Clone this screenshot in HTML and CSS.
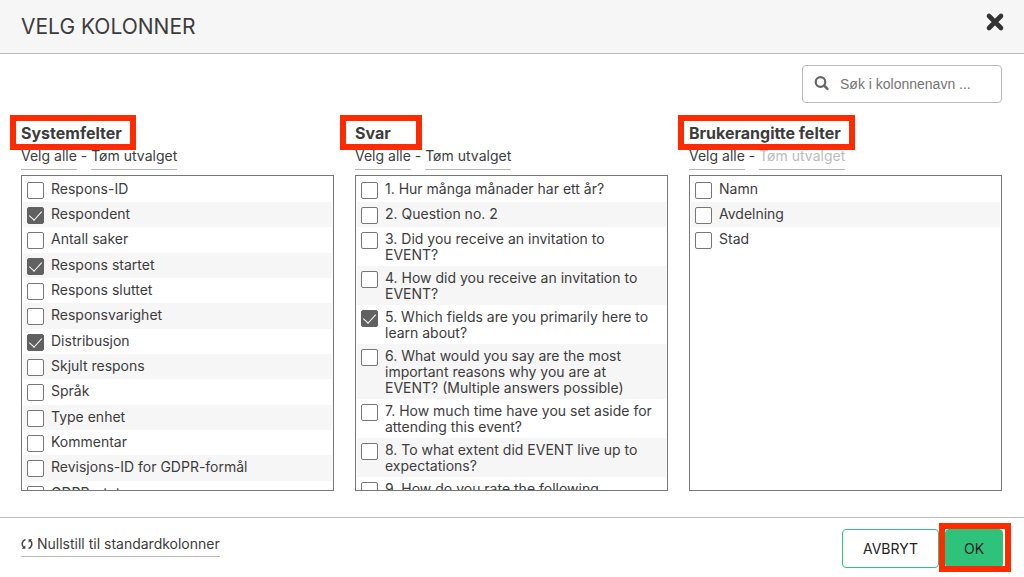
FILE: index.html
```
<!DOCTYPE html>
<html lang="no">
<head>
    <meta charset="UTF-8">
    <meta name="viewport" content="width=device-width, initial-scale=1.0">
    <title>Velg kolonner</title>
    <link rel="stylesheet" href="styles.css">
</head>
<body>
    <header class="header">
        <h1>VELG KOLONNER</h1>
        <button type="button" class="close" aria-label="Lukk">
            <svg width="20" height="20" viewBox="0 0 20 20"><path d="M4 4L16 16M16 4L4 16" fill="none" stroke="#333" stroke-width="4.6" stroke-linecap="round"/></svg>
        </button>
    </header>

    <main class="content">
        <div class="search">
            <svg width="16" height="16" viewBox="0 0 16 16"><circle cx="6.5" cy="6" r="4.8" fill="none" stroke="#666" stroke-width="2.2"/><path d="M10.2 9.7L13.4 12.9" stroke="#666" stroke-width="2.6" stroke-linecap="round"/></svg>
            <input type="text" aria-label="Søk i kolonnenavn" placeholder="Søk i kolonnenavn ...">
        </div>

        <div class="columns">
            <section class="column">
                <h2 class="marked">Systemfelter</h2>
                <div class="actions"><a href="#">Velg alle</a> - <a href="#">Tøm utvalget</a></div>
                <ul class="list">
                    <li><label><input type="checkbox"><span>Respons-ID</span></label></li>
                    <li><label><input type="checkbox" checked><span>Respondent</span></label></li>
                    <li><label><input type="checkbox"><span>Antall saker</span></label></li>
                    <li><label><input type="checkbox" checked><span>Respons startet</span></label></li>
                    <li><label><input type="checkbox"><span>Respons sluttet</span></label></li>
                    <li><label><input type="checkbox"><span>Responsvarighet</span></label></li>
                    <li><label><input type="checkbox" checked><span>Distribusjon</span></label></li>
                    <li><label><input type="checkbox"><span>Skjult respons</span></label></li>
                    <li><label><input type="checkbox"><span>Språk</span></label></li>
                    <li><label><input type="checkbox"><span>Type enhet</span></label></li>
                    <li><label><input type="checkbox"><span>Kommentar</span></label></li>
                    <li><label><input type="checkbox"><span>Revisjons-ID for GDPR-formål</span></label></li>
                    <li><label><input type="checkbox"><span>GDPR-status</span></label></li>
                </ul>
            </section>

            <section class="column">
                <h2 class="marked short">Svar</h2>
                <div class="actions"><a href="#">Velg alle</a> - <a href="#">Tøm utvalget</a></div>
                <ul class="list">
                    <li><label><input type="checkbox"><span>1. Hur många månader har ett år?</span></label></li>
                    <li><label><input type="checkbox"><span>2. Question no. 2</span></label></li>
                    <li><label><input type="checkbox"><span>3. Did you receive an invitation to EVENT?</span></label></li>
                    <li><label><input type="checkbox"><span>4. How did you receive an invitation to EVENT?</span></label></li>
                    <li><label><input type="checkbox" checked><span>5. Which fields are you primarily here to learn about?</span></label></li>
                    <li><label><input type="checkbox"><span>6. What would you say are the most important reasons why you are at EVENT? (Multiple answers possible)</span></label></li>
                    <li><label><input type="checkbox"><span>7. How much time have you set aside for attending this event?</span></label></li>
                    <li><label><input type="checkbox"><span>8. To what extent did EVENT live up to expectations?</span></label></li>
                    <li><label><input type="checkbox"><span>9. How do you rate the following</span></label></li>
                </ul>
            </section>

            <section class="column">
                <h2 class="marked">Brukerangitte felter</h2>
                <div class="actions"><a href="#">Velg alle</a> - <a href="#" class="disabled">Tøm utvalget</a></div>
                <ul class="list">
                    <li><label><input type="checkbox"><span>Namn</span></label></li>
                    <li><label><input type="checkbox"><span>Avdelning</span></label></li>
                    <li><label><input type="checkbox"><span>Stad</span></label></li>
                </ul>
            </section>
        </div>
    </main>

    <footer class="footer">
        <a href="#" class="reset">
            <svg width="12" height="12" viewBox="0 0 12 12"><path d="M4.5 1.5C1 2.5 0 7 3 10M7.5 10.5C11 9.5 12 5 9 2" fill="none" stroke="#444" stroke-width="1.5"/><path d="M0.8 10.8H4.4V7.2ZM11.2 1.2H7.6V4.8Z" fill="#444"/></svg>
            Nullstill til standardkolonner
        </a>
        <div class="buttons">
            <button type="button" class="btn">AVBRYT</button>
            <div class="marked ok">
                <button type="button" class="btn primary">OK</button>
            </div>
        </div>
    </footer>
</body>
</html>
```
FILE: styles.css
```
* {
    box-sizing: border-box;
}
body {
    margin: 0;
    height: 100vh;
    display: flex;
    flex-direction: column;
    font-family: Inter, "Liberation Sans", sans-serif;
    font-size: 14px;
    line-height: 16px;
    color: #3c3c3c;
    background-color: #fff;
}
a {
    color: inherit;
    text-decoration: none;
    border-bottom: 1px solid #b8b8b8;
}

/* header */
.header {
    display: flex;
    justify-content: space-between;
    align-items: center;
    height: 54px;
    padding: 0 19px 0 21px;
    background-color: #f6f6f6;
    border-bottom: 1px solid #bbb;
}
.header h1 {
    margin: 0;
    font-size: 21px;
    line-height: 24px;
    font-weight: 400;
}
.close {
    display: flex;
    margin-bottom: 9px;
    padding: 0;
    border: none;
    background: none;
    cursor: pointer;
}

/* search */
.content {
    flex: 1;
    min-height: 0;
    display: flex;
    flex-direction: column;
    padding: 11px 22px 26px 21px;
}
.search {
    align-self: flex-end;
    display: flex;
    align-items: center;
    gap: 10px;
    width: 200px;
    height: 38px;
    padding: 0 11px;
    border: 1px solid #bbb;
    border-radius: 4px;
}
.search svg {
    flex: none;
}
.search input {
    width: 100%;
    padding: 0;
    border: none;
    outline: none;
    font-family: "Liberation Sans", Arial, sans-serif;
    font-size: 14px;
}
.search input::placeholder {
    color: #757575;
}

/* columns */
.columns {
    flex: 1;
    min-height: 0;
    display: flex;
    gap: 21px;
    padding-top: 20px;
}
.column {
    flex: 1;
    min-width: 0;
    display: flex;
    flex-direction: column;
    align-items: flex-start;
}
.column h2 {
    margin: 0;
    font-size: 16px;
    line-height: 20px;
    font-weight: 700;
}
.column h2.short {
    min-width: 56px;
}
.marked {
    position: relative;
}
.marked::after {
    content: "";
    position: absolute;
    inset: -8px -14px -7px -11px;
    border: 6px solid #ff2a00;
    pointer-events: none;
}
.short::after {
    left: -15px;
    right: -11px;
}
.actions {
    margin: 4px 0 5px;
    line-height: 18px;
}
.actions a {
    display: inline-block;
    height: 23px;
}
.actions .disabled {
    color: #bbb;
}
.list {
    flex: 1;
    width: 100%;
    min-height: 0;
    margin: 0;
    padding: 1px 1px 0;
    list-style: none;
    border: 1px solid #777;
    overflow: hidden;
}
.list li {
    min-height: 25px;
    padding: 4px 8px 3px 4px;
}
.list li:nth-child(3n) {
    min-height: 26px;
}
.list li:nth-child(even) {
    background-color: #f6f6f6;
}
.list label {
    display: flex;
    align-items: flex-start;
    gap: 7px;
}
.list input {
    appearance: none;
    flex: none;
    display: flex;
    justify-content: center;
    width: 17px;
    height: 17px;
    margin: 1px 0 0;
    border: 1px solid #777;
    border-radius: 2px;
    background-color: #fff;
}
.list input:checked {
    border-color: #616161;
    background-color: #616161;
}
.list input:checked::after {
    content: "";
    width: 6px;
    height: 11px;
    border: solid #fff;
    border-width: 0 1px 1px 0;
    transform: rotate(42deg);
}

/* footer */
.footer {
    display: flex;
    justify-content: space-between;
    align-items: flex-start;
    height: 60px;
    padding: 11px 21px 0;
    border-top: 1px solid #bbb;
}
.reset {
    display: flex;
    align-items: center;
    gap: 4px;
    margin-top: 2px;
    height: 26px;
}
.buttons {
    display: flex;
    gap: 6px;
}
.btn {
    display: block;
    min-width: 58px;
    height: 39px;
    padding: 0 20px;
    border: 1px solid #2fc27a;
    border-radius: 4px;
    background-color: #fff;
    color: #222;
    font-family: inherit;
    font-size: 14px;
    cursor: pointer;
}
.primary {
    padding: 0 16px;
    background-color: #2fc27a;
}
.ok::after {
    inset: -6px -8px -4px -6px;
}
```
